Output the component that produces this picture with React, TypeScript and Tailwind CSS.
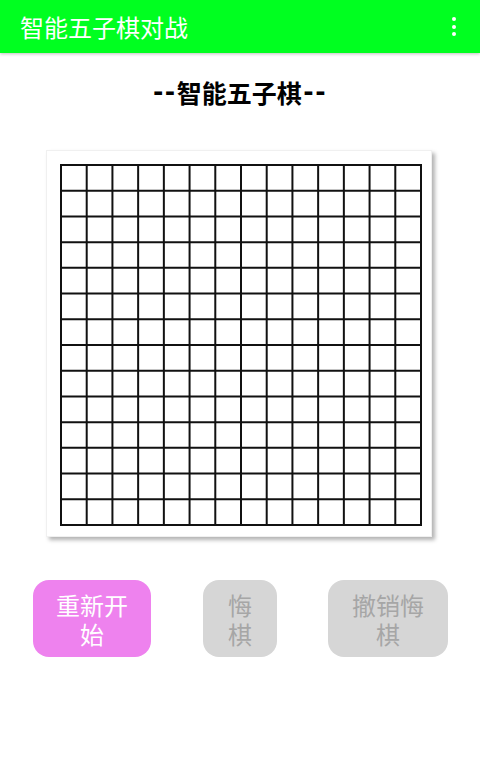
import React from "react";

const FONT = { fontFamily: '"Noto Sans CJK SC", "Noto Sans", Roboto, sans-serif' };

function Board() {
  const n = 14;
  const size = 360;
  const step = size / n;
  const lines = [];
  for (let i = 0; i <= n; i++) {
    const p = 1 + i * step;
    lines.push(<line key={"h" + i} x1={0} y1={p} x2={size + 2} y2={p} stroke="#111" strokeWidth={2} />);
    lines.push(<line key={"v" + i} x1={p} y1={0} x2={p} y2={size + 2} stroke="#111" strokeWidth={2} />);
  }
  return (
    <svg width={size + 2} height={size + 2} viewBox={`0 0 ${size + 2} ${size + 2}`}>
      {lines}
    </svg>
  );
}

export default function App() {
  return (
    <div className="w-[480px] h-[757px] bg-white flex flex-col" style={FONT}>
      <div className="h-[53px] shrink-0 bg-[#00ff20] flex items-center justify-between pl-[20px] pr-[24px] shadow-[0_1px_3px_rgba(0,0,0,0.25)] relative z-10">
        <span className="text-white text-[24px] leading-[30px]">智能五子棋对战</span>
        <div className="flex flex-col gap-[3.5px] items-center">
          <span className="w-[4px] h-[4px] rounded-full bg-white" />
          <span className="w-[4px] h-[4px] rounded-full bg-white" />
          <span className="w-[4px] h-[4px] rounded-full bg-white" />
        </div>
      </div>
      <div className="mt-[23px] h-[32px] shrink-0 flex items-center justify-center text-[25px] leading-[32px] font-bold text-black">
        <span className="font-['DejaVu_Sans'] tracking-[1.5px]">--</span>
        <span>智能五子棋</span>
        <span className="font-['DejaVu_Sans'] tracking-[1.5px] ml-[1.5px]">--</span>
      </div>
      <div className="mt-[42px] ml-[46px] shrink-0 w-[386px] h-[387px] bg-white border border-[#f0f0f0] shadow-[3px_3px_4px_rgba(0,0,0,0.3)] pt-[13px] pl-[13px]">
        <Board />
      </div>
      <div className="mt-[43px] flex pl-[33px]">
        <div className="w-[118px] h-[77px] rounded-[16px] bg-[#ee82ee] text-white text-[24px] leading-[29px] flex flex-col items-center justify-center">
          <span>重新开</span>
          <span>始</span>
        </div>
        <div className="ml-[52px] w-[74px] h-[77px] rounded-[16px] bg-[#d6d6d6] text-[#a6a6a6] text-[24px] leading-[29px] flex flex-col items-center justify-center">
          <span>悔</span>
          <span>棋</span>
        </div>
        <div className="ml-[51px] w-[120px] h-[77px] rounded-[16px] bg-[#d6d6d6] text-[#a6a6a6] text-[24px] leading-[29px] flex flex-col items-center justify-center">
          <span>撤销悔</span>
          <span>棋</span>
        </div>
      </div>
    </div>
  );
}
